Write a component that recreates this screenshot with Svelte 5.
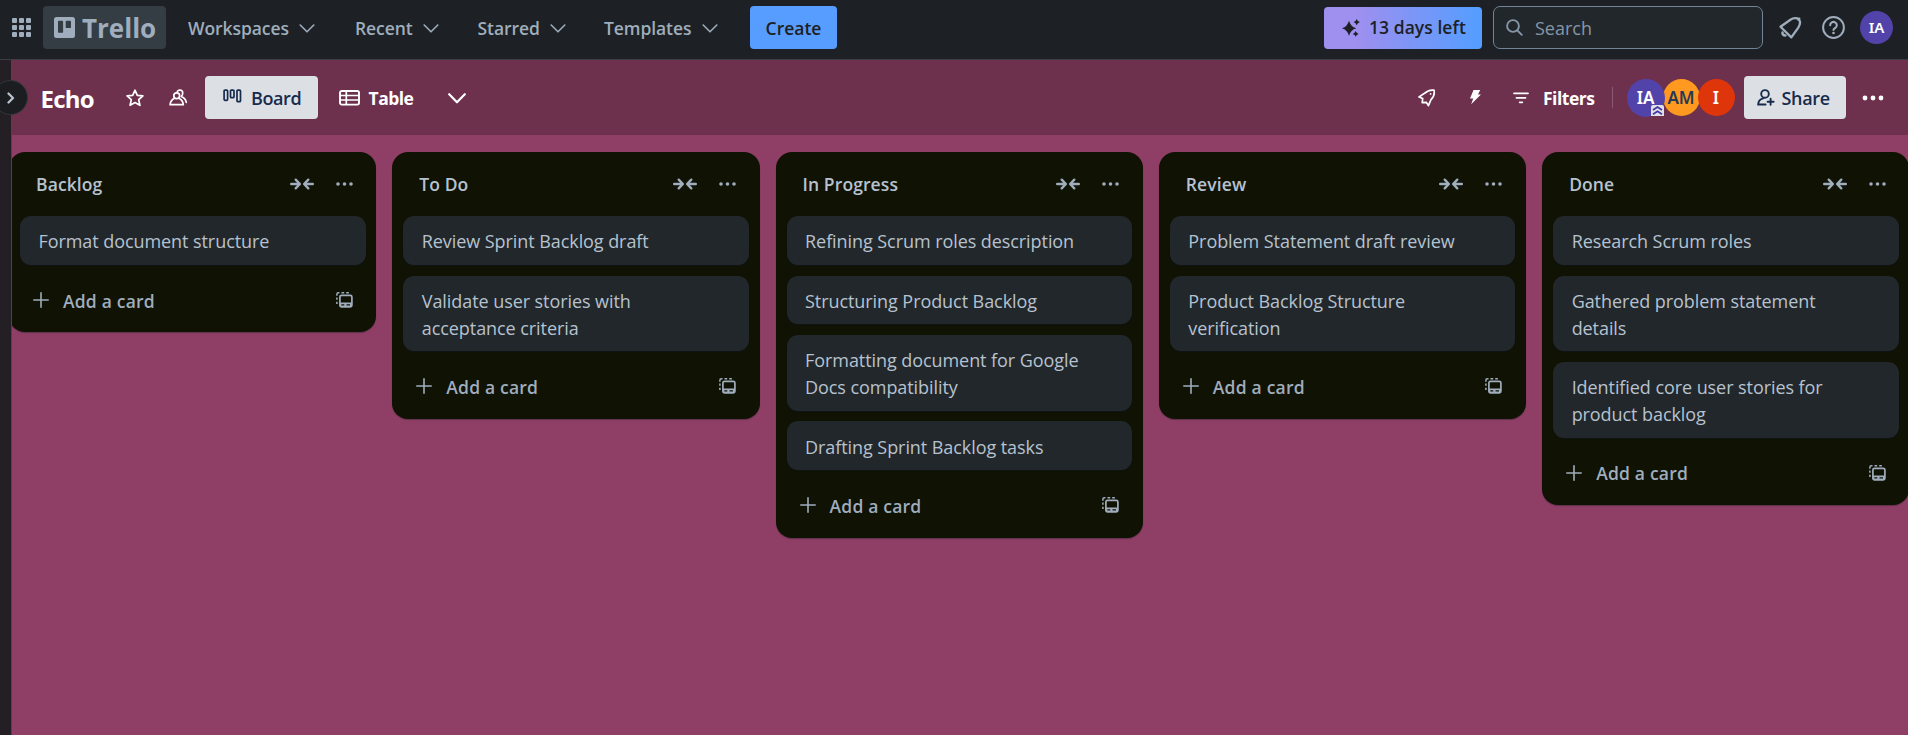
<script>
  const menus = [
    { label: 'Workspaces', width: 167 },
    { label: 'Recent', width: 122.5 },
    { label: 'Starred', width: 126.5 },
    { label: 'Templates', width: 146 }
  ];

  const lists = [
    { title: 'Backlog', cards: ['Format document structure'] },
    { title: 'To Do', cards: ['Review Sprint Backlog draft', 'Validate user stories with acceptance criteria'] },
    {
      title: 'In Progress',
      cards: [
        'Refining Scrum roles description',
        'Structuring Product Backlog',
        'Formatting document for Google Docs compatibility',
        'Drafting Sprint Backlog tasks'
      ]
    },
    { title: 'Review', cards: ['Problem Statement draft review', 'Product Backlog Structure verification'] },
    {
      title: 'Done',
      cards: ['Research Scrum roles', 'Gathered problem statement details', 'Identified core user stories for product backlog']
    }
  ];
</script>

<div class="app">
  <header class="topbar">
    <svg class="apps" width="19" height="19" viewBox="0 0 19 19">
      {#each [0, 7, 14] as y}
        {#each [0, 7, 14] as x}
          <rect {x} {y} width="5" height="5" rx="1" fill="currentColor" />
        {/each}
      {/each}
    </svg>
    <div class="brand">
      <svg width="21" height="21" viewBox="0 0 21 21">
        <path fill="currentColor" fill-rule="evenodd" d="M2.5 0h16A2.5 2.5 0 0 1 21 2.5v16a2.5 2.5 0 0 1-2.5 2.5h-16A2.5 2.5 0 0 1 0 18.500V2.500A2.500 2.500 0 0 1 2.500 0zM4.900 3.800a.9.9 0 0 0-.9.9v10.200a.9.9 0 0 0 .9.9h3.300a.9.9 0 0 0 .9-.9v-10.200a.9.9 0 0 0-.9-.9zM12.600 3.800a.9.9 0 0 0-.9.9v5.500a.9.9 0 0 0 .9.9h3.500a.9.9 0 0 0 .9-.9v-5.500a.9.9 0 0 0-.9-.9z" />
      </svg>
      <span>Trello</span>
    </div>
    <nav>
      {#each menus as m}
        <div class="menu" style:width="{m.width}px">
          <span>{m.label}</span>
          <svg width="16" height="9" viewBox="0 0 16 9"><path d="M1.200 1l6.800 6.800L14.800 1" fill="none" stroke="currentColor" stroke-width="1.600" stroke-linecap="round" stroke-linejoin="round" /></svg>
        </div>
      {/each}
    </nav>
    <button class="create"><span>Create</span></button>
    <div class="spacer"></div>
    <button class="trial">
      <svg width="18" height="18" viewBox="0 0 18 18" fill="currentColor">
        <path d="M7 1.700Q8.600 7.600 14.300 9.200Q8.600 10.800 7 16.700Q5.400 10.800 0 9.200Q5.400 7.600 7 1.700z" />
        <path d="M14.700 0q.7 2.400 3.200 3.100q-2.500.7-3.200 3.200q-.7-2.500-3.100-3.200q2.400-.7 3.100-3.100zM13.700 12q.6 2.300 2.900 2.900q-2.300.6-2.900 2.900q-.6-2.300-2.900-2.900q2.300-.6 2.900-2.900z" />
      </svg>
      <span>13 days left</span>
    </button>
    <div class="search">
      <svg width="17" height="17" viewBox="0 0 17 17" fill="none" stroke="currentColor" stroke-width="1.900" stroke-linecap="round"><circle cx="7" cy="7" r="5.900" /><path d="M11.300 11.300L15.800 15.800" /></svg>
      <span>Search</span>
    </div>
    <svg class="bell" width="24" height="24" viewBox="0 0 24 24" fill="none" stroke="currentColor" stroke-width="2.300" stroke-linejoin="round" stroke-linecap="round">
      <path d="M2.500 10.800L12.400 3.700C15.600 1.700 19.200 1.900 20.700 3.200C22.300 4.900 22.300 8.400 20.300 11.600L13.300 21.400z" />
      <path d="M4.500 16.600a2.600 2.600 0 0 0 2.900 2.900" stroke-width="2.600" />
      <path d="M20.300 3.600l1-1" />
    </svg>
    <svg class="help" width="23" height="23" viewBox="0 0 23 23" fill="none" stroke="currentColor" stroke-width="2" stroke-linecap="round">
      <circle cx="11.500" cy="11.500" r="10.400" /><path d="M8.200 9.200a3.300 3.300 0 1 1 5 2.800c-1.100.7-1.700 1-1.700 2" stroke-width="2.100" /><circle cx="11.500" cy="17" r="1.300" fill="currentColor" stroke="none" />
    </svg>
    <div class="avatar me">IA</div>
  </header>

  <div class="workspace">
    <aside>
      <div class="expand"><svg width="8" height="12" viewBox="0 0 8 12"><path d="M1.500 1.500L6 6l-4.500 4.500" fill="none" stroke="#b6c2cf" stroke-width="2.300" stroke-linecap="round" stroke-linejoin="round" /></svg></div>
    </aside>
    <main>
      <div class="boardbar">
        <h1>Echo</h1>
        <svg class="star" width="18" height="18" viewBox="0 0 18 18"><path d="M9 1.200l2.300 5.100 5.600.6-4.200 3.800 1.200 5.600L9 13.500l-4.900 2.800 1.200-5.600L1.100 6.900l5.600-.6z" fill="none" stroke="#fff" stroke-width="1.700" stroke-linejoin="round" /></svg>
        <svg class="people" width="19" height="17" viewBox="0 0 19 17" fill="none" stroke="#fff" stroke-width="1.700" stroke-linejoin="round" stroke-linecap="round">
          <circle cx="7.700" cy="6.800" r="2.900" /><path d="M5.600 9.200C3 10.500 1.200 12.500 1.100 15.700H14.300C14.200 12.500 12.400 10.500 9.800 9.200" /><path d="M8.300 2.400C9.600 .4 13.700 .6 13.700 3.900c0 1.500-.5 2.700-1.300 3.500 2.900 1.400 4.600 3.400 4.900 6.100" />
        </svg>
        <button class="view active">
          <svg width="19" height="14" viewBox="0 0 19 14" fill="none" stroke="#172b4d" stroke-width="1.700"><rect x="1.100" y="1.100" width="3.500" height="10.200" rx="1" /><rect x="7.500" y="1.100" width="3.500" height="7.600" rx="1" /><rect x="14" y="1.100" width="3.500" height="11.600" rx="1" /></svg>
          <span>Board</span>
        </button>
        <div class="table">
          <svg width="21" height="16" viewBox="0 0 21 16" fill="none" stroke="#fff" stroke-width="1.900"><rect x="1" y="1" width="19" height="13.600" rx="1.800" /><path d="M1 5.500h19M1 10h19M7.300 1v13.500" stroke-width="1.700" /></svg>
          <span>Table</span>
        </div>
        <svg class="more-views" width="18" height="11" viewBox="0 0 18 11"><path d="M1.200 1.200L9 9.300l7.800-8.100" fill="none" stroke="#fff" stroke-width="2.200" stroke-linecap="round" stroke-linejoin="round" /></svg>
        <div class="spacer"></div>
        <svg class="rocket" width="18" height="18" viewBox="0 0 18 18" fill="none" stroke="#fff" stroke-width="1.700" stroke-linejoin="round">
          <path d="M1 7.900L6.600 4.300C9.500 1.500 13 .7 16 1.200c.7 3-.4 6.800-3 9.500l-2.600 5.900-2.100-3.300-4.100.4.500-4.200z" /><circle cx="12.600" cy="4.900" r=".9" fill="#fff" stroke="none" />
        </svg>
        <svg class="bolt" width="11" height="15" viewBox="0 0 11 15"><path d="M3.500 0h6.700L8 4.600h3L1.200 14.300 3.200 8.500H0z" fill="#fff" /></svg>
        <svg class="filter" width="16" height="12" viewBox="0 0 16 12" stroke="#fff" stroke-width="1.800" stroke-linecap="round"><path d="M1 1.300h14M3.500 5.800h9M6.700 10.300h2.600" /></svg>
        <span class="filters">Filters</span>
        <div class="divider"></div>
        <div class="members">
          <div class="avatar ia">IA
            <svg width="13" height="11" viewBox="0 0 13 11"><path d="M0 2Q0 0 2 0h9q2 0 2 2v9H0z" fill="#dfe1e6" /><path d="M2 5l4.500-3L11 5M2 9.200l4.500-3 4.500 3" fill="none" stroke="#4137a5" stroke-width="1.700" /></svg>
          </div>
          <div class="avatar am">AM</div>
          <div class="avatar i">I</div>
        </div>
        <button class="share">
          <svg width="18" height="17" viewBox="0 0 18 17" fill="none" stroke="#172b4d" stroke-width="1.900" stroke-linecap="round"><circle cx="8" cy="4.900" r="3.800" /><path d="M8.600 15.500H1.200c0-3.200 1.900-5.400 5-6.200M13.600 9.800v6M10.600 12.800h6" /></svg>
          <span>Share</span>
        </button>
        <svg class="dots" width="22" height="6" viewBox="0 0 22 6" fill="#fff"><circle cx="3" cy="3" r="2.400" /><circle cx="11" cy="3" r="2.400" /><circle cx="19" cy="3" r="2.400" /></svg>
      </div>

      <div class="lists">
        {#each lists as list}
          <section>
            <div class="list-head">
              <h2>{list.title}</h2>
              <svg class="collapse" width="24" height="12" viewBox="0 0 24 12" fill="none" stroke="currentColor" stroke-width="2.400" stroke-linecap="round" stroke-linejoin="round"><path d="M1.200 6h8.400M5.700 1.700L9.900 6l-4.200 4.300M22.800 6h-8.400M18.300 1.700L14.100 6l4.200 4.300" /></svg>
              <svg width="17" height="4" viewBox="0 0 17 4" fill="currentColor"><circle cx="2" cy="2" r="1.800" /><circle cx="8.500" cy="2" r="1.800" /><circle cx="15" cy="2" r="1.800" /></svg>
            </div>
            <div class="cards">
              {#each list.cards as card}
                <article>{card}</article>
              {/each}
            </div>
            <div class="add">
              <svg class="plus" width="16" height="16" viewBox="0 0 16 16" stroke="currentColor" stroke-width="1.600" stroke-linecap="round"><path d="M8 .8v14.400M.8 8h14.400" /></svg>
              <span>Add a card</span>
              <svg width="17" height="16" viewBox="0 0 17 16" fill="none" stroke="currentColor" stroke-width="1.700">
                <rect x="3.900" y="3.300" width="12" height="11.600" rx="1.600" /><path d="M4 10.500h12v4H4z" fill="currentColor" stroke="none" /><path d="M5.300 12.900h3M10.500 12.900h3.500" stroke="#101204" stroke-width="1.100" /><path d="M.9 12V9.800M.9 7.800V5.500M.9 3.700V2.300Q.9 .8 2.300 .8H3.500M5.500.8h2.700M10.200.8h2.700" stroke-width="1.500" />
              </svg>
            </div>
          </section>
        {/each}
      </div>
    </main>
  </div>
</div>

<style>
  :global(body) { background: #8f3f65; overflow: hidden; }
  .app { width: 100vw; height: 100vh; overflow: hidden; display: flex; flex-direction: column; font-family: 'Open Sans', 'Noto Sans', sans-serif; font-size: 18px; line-height: 27px; color: #b6c2cf; }
  svg { display: block; flex: none; }
  * { box-sizing: border-box; }
  button { font: inherit; border: 0; padding: 0; display: flex; align-items: center; flex: none; }
  span { white-space: nowrap; }
  .spacer { flex: 1; }
  .topbar { flex: none; height: 60px; background: #1d2125; border-bottom: 1px solid #3b3d42; display: flex; align-items: center; padding: 0 15px 4px 12px; color: #9fadbc; }
  .brand { width: 123px; height: 43px; margin-left: 12px; background: #343c44; border-radius: 4px; display: flex; align-items: center; gap: 7px; padding-left: 11px; font-size: 26px; font-weight: 700; letter-spacing: 0; }
  .brand span { line-height: 40px; }
  nav { display: flex; margin: 2px 0 0 22px; font-weight: 600; font-size: 17.500px; letter-spacing: -0.08px; }
  .menu { display: flex; align-items: center; gap: 10.500px; flex: none; }
  .create { width: 87px; height: 43px; border-radius: 4px; background: #579dff; color: #1d2125; justify-content: center; font-weight: 600; font-size: 17.500px; letter-spacing: 0; }
  .create span, .search span { padding-top: 2px; }
  .trial { width: 158px; height: 42px; margin-right: 11px; border-radius: 4px; background: linear-gradient(90deg, #9f8fef 20%, #579dff 95%); color: #1d2125; padding-left: 18px; gap: 9px; font-weight: 600; font-size: 17.500px; letter-spacing: 0.05px; }
  .search { width: 270px; height: 43px; border: 1px solid #738496; border-radius: 7px; background: #22272b; display: flex; align-items: center; gap: 12px; padding-left: 12px; color: #8696a7; }
  .bell { margin-left: 15px; }
  .help { margin-left: 20px; }
  .avatar { border-radius: 50%; display: flex; align-items: center; justify-content: center; flex: none; font-weight: 600; color: #fff; font-family: 'Noto Sans', sans-serif; }
  .me { width: 33px; height: 33px; background: #5243aa; margin-left: 15px; font-size: 15px; }
  .workspace { flex: 1; display: flex; min-height: 0; }
  aside { width: 11.500px; flex: none; background: #241f25; border-right: 1px solid #4d4349; position: relative; z-index: 1; }
  .expand { position: absolute; left: -7px; top: 20px; width: 35px; height: 35px; border-radius: 50%; background: #1b1d21; border: 1px solid #34363b; display: flex; align-items: center; padding-left: 13px; }
  main { flex: 1; min-width: 0; }
  .boardbar { height: 75px; background: #6d304d; display: flex; align-items: center; padding: 0 24px 0 29px; color: #fff; font-weight: 600; letter-spacing: -0.5px; }
  .boardbar span { padding-top: 2px; }
  h1 { margin: 0; width: 85px; padding-top: 2px; font-size: 24px; font-weight: 700; letter-spacing: -0.8px; }
  .people { margin-left: 25px; }
  .view { width: 113px; height: 43px; margin-left: 17px; background: #dcdfe4; color: #172b4d; border-radius: 4px; padding-left: 18px; gap: 9.500px; font-weight: 600; letter-spacing: -0.4px; }
  .view svg { margin-bottom: 3px; }
  .table { display: flex; align-items: center; gap: 9px; margin-left: 21px; width: 109px; font-weight: 700; font-size: 17.500px; }
  .more-views { margin-top: 1px; }
  .bolt { margin-left: 34px; }
  .filter { margin-left: 32px; }
  .filters { width: 69px; margin-left: 14px; font-weight: 700; font-size: 17.500px; }
  .divider { width: 1px; height: 21px; background: #8a5a71; }
  .members { display: flex; margin-left: 13.500px; width: 117px; letter-spacing: 0; }
  .members .avatar { width: 37px; height: 37px; font-size: 17px; }
  .members .ia { position: relative; z-index: 1; width: 38px; height: 38px; background: #5243aa; margin-right: -2px; }
  .ia svg { position: absolute; right: 1px; bottom: 1px; }
  .am { background: #ff991f; color: #253858 !important; margin-right: -2px; }
  .i { background: #de350b; }
  .share { width: 102px; height: 43px; background: #dcdfe4; color: #172b4d; border-radius: 4px; padding-left: 13px; gap: 7px; font-weight: 600; letter-spacing: -0.3px; }
  .dots { margin-left: 16.500px; }
  .lists { display: flex; align-items: flex-start; gap: 16.200px; margin: 17px 0 0 -2.300px; }
  section { width: 367.100px; flex: none; background: #101204; border-radius: 16px; padding: 0 10.800px; box-shadow: 0 1px 1px #0918245c; }
  .list-head { height: 64.200px; display: flex; align-items: center; padding: 0 13px 0 16px; color: #9fadbc; }
  h2 { margin: 0; flex: 1; font-size: 17.500px; font-weight: 600; color: #b6c2cf; letter-spacing: 0.1px; }
  .collapse { margin-right: 22px; }
  .cards { display: flex; flex-direction: column; gap: 10.800px; }
  article { background: #22272b; border-radius: 11px; padding: 12.200px 40px 9.400px 18.500px; box-shadow: 0 1px 1px #091e4240; letter-spacing: -0.07px; }
  .add { height: 67.700px; display: flex; align-items: center; padding: 3px 13px 0; color: #9fadbc; font-weight: 600; }
  .add span { flex: 1; margin-left: 14px; padding-top: 2px; font-size: 17.500px; letter-spacing: 0.2px; }
</style>
